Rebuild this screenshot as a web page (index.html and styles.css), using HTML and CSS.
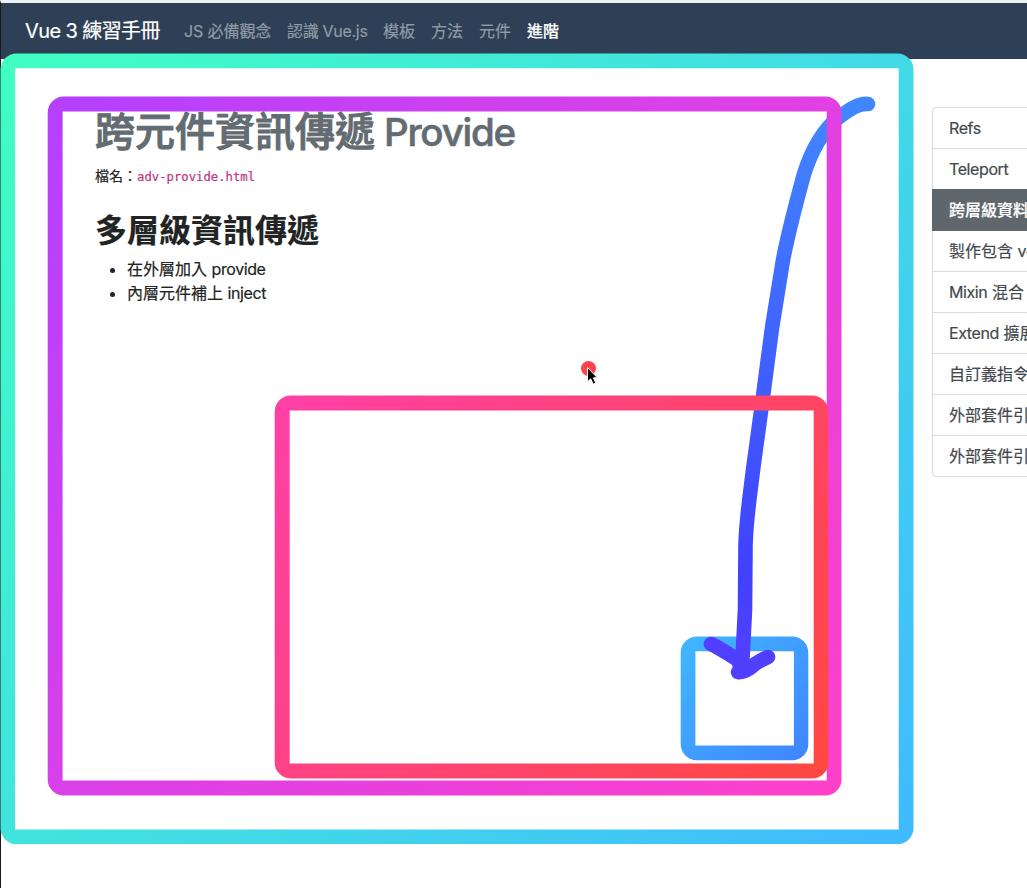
FILE: index.html
```html
<!DOCTYPE html>
<html lang="zh-Hant">
<head>
<meta charset="utf-8">
<title>Vue 3 練習手冊</title>
<link rel="stylesheet" href="styles.css">
</head>
<body>
<div class="window">
  <nav class="navbar">
    <a class="brand">Vue 3 練習手冊</a>
    <a class="nav-link nav-js">JS 必備觀念</a>
    <a class="nav-link nav-vue">認識 Vue.js</a>
    <a class="nav-link">模板</a>
    <a class="nav-link">方法</a>
    <a class="nav-link">元件</a>
    <a class="nav-link active">進階</a>
  </nav>
  <div class="layout">
    <main class="content">
      <h1 class="title">跨元件資訊傳遞<span class="title-latin"> Provide</span></h1>
      <p class="filename">檔名：<code class="code">adv-provide.html</code></p>
      <h2 class="subtitle">多層級資訊傳遞</h2>
      <ul class="list">
        <li>在外層加入 <span class="latin">provide</span></li>
        <li>內層元件補上 <span class="latin">inject</span></li>
      </ul>
    </main>
    <aside class="menu">
      <a class="menu-item"><span class="latin">Refs</span></a>
      <a class="menu-item"><span class="latin">Teleport</span></a>
      <a class="menu-item selected">跨層級資料</a>
      <a class="menu-item">製作包含 <span class="latin">v-</span></a>
      <a class="menu-item"><span class="latin">Mixin</span> 混合</a>
      <a class="menu-item"><span class="latin">Extend</span> 擴展</a>
      <a class="menu-item">自訂義指令</a>
      <a class="menu-item">外部套件引</a>
      <a class="menu-item">外部套件引</a>
    </aside>
  </div>
</div>
<svg class="drawing" width="1027" height="888" viewBox="0 0 1027 888">
  <defs>
    <linearGradient id="teal" gradientUnits="userSpaceOnUse" x1="0" y1="54" x2="913" y2="844"><stop offset="0" stop-color="#40ffc2"/><stop offset=".5" stop-color="#41dfe2"/><stop offset="1" stop-color="#40baff"/></linearGradient>
    <linearGradient id="purple" gradientUnits="userSpaceOnUse" x1="48" y1="97" x2="841" y2="795"><stop offset="0" stop-color="#b440ff"/><stop offset=".5" stop-color="#dd40e6"/><stop offset="1" stop-color="#ff40c8"/></linearGradient>
    <linearGradient id="red" gradientUnits="userSpaceOnUse" x1="275" y1="396" x2="828" y2="778"><stop offset="0" stop-color="#ff40a8"/><stop offset=".5" stop-color="#ff4474"/><stop offset="1" stop-color="#ff4840"/></linearGradient>
    <linearGradient id="blue" gradientUnits="userSpaceOnUse" x1="681" y1="637" x2="808" y2="760"><stop offset="0" stop-color="#40b8ff"/><stop offset="1" stop-color="#4084ff"/></linearGradient>
    <linearGradient id="arrow" gradientUnits="userSpaceOnUse" x1="0" y1="100" x2="0" y2="680"><stop offset="0" stop-color="#4088ff"/><stop offset=".8" stop-color="#4042ff"/><stop offset="1" stop-color="#5540ff"/></linearGradient>
  </defs>
  <circle cx="588.5" cy="368.5" r="7.5" fill="#ff4449"/>
  <path class="frame" fill="url(#teal)" d="M16.500 53.600H897.500A16 16 0 0 1 913.500 69.600V828.100A16 16 0 0 1 897.500 844.100H16.500A16 16 0 0 1 .5 828.100V69.600A16 16 0 0 1 16.500 53.600ZM15 68.300V829.500H898.700V68.300Z"/>
  <path class="frame" fill="url(#blue)" d="M696.700 636.500H792.300A16 16 0 0 1 808.300 652.500V744.300A16 16 0 0 1 792.300 760.300H696.700A16 16 0 0 1 680.700 744.300V652.500A16 16 0 0 1 696.700 636.500ZM695.400 651.200V745.500H793.900V651.200Z"/>
  <g class="strokes">
    <path d="M868 104C858 103 849 110 839 117C823 130 811 152 804 174C795 207 788 234 783 260L772 328L762 404L753 470C750 496 746 520 745.500 546L745 610L742.500 658L742 664" stroke="url(#arrow)"/>
    <path d="M711 644C720 648 728 654 738 660L742 671M738 672Q745 673 755 664Q761 660 768 657" stroke="#513fff"/>
  </g>
  <path class="frame" fill="url(#purple)" d="M63.700 96.500H825.500A16 16 0 0 1 841.500 112.500V779.400A16 16 0 0 1 825.500 795.400H63.700A16 16 0 0 1 47.700 779.400V112.500A16 16 0 0 1 63.700 96.500ZM62.600 111.400V780.600H826.700V111.400Z"/>
  <path class="frame" fill="url(#red)" d="M290.700 395.500H812.300A16 16 0 0 1 828.300 411.500V762.500A16 16 0 0 1 812.300 778.500H290.700A16 16 0 0 1 274.700 762.500V411.500A16 16 0 0 1 290.700 395.500ZM289.700 410.400V763.500H813.700V410.400Z"/>
  <path class="pointer" d="M587.500 367.500V381.800L590.700 378.800L593.200 384.200L595.800 383L593.400 377.800H597.400Z"/>
</svg>
</body>
</html>
```
FILE: styles.css
```css
* { box-sizing: border-box; }
body {
  margin: 0;
  height: 888px;
  overflow: hidden;
  position: relative;
  background: #fff;
  color: #212423;
  font: 16px/24px Inter, "Noto Sans CJK TC", sans-serif;
  -webkit-text-stroke: 0.2px currentColor;
}
.window {
  height: 888px;
  border-left: 1px solid #17191f;
  border-top: 3px solid #eef1f4;
  overflow: hidden;
}
.navbar {
  height: 56px;
  padding-left: 24px;
  display: flex;
  align-items: center;
  background: #2e4055;
  white-space: nowrap;
}
.brand {
  width: 135px;
  margin-right: 16px;
  font-size: 20px;
  letter-spacing: -0.6px;
  color: #fff;
}
.nav-link { padding: 0 8px; color: #919ba6; }
.nav-js { width: 103px; letter-spacing: -0.1px; }
.nav-vue { width: 96px; letter-spacing: -0.3px; }
.active { color: #fff; font-weight: 500; }
.layout { display: flex; }
.content { flex: none; width: 931px; padding: 49px 0 0 94px; }
.title {
  margin: 0 0 9px;
  font-size: 40px;
  line-height: 48px;
  font-weight: 500;
  color: #636c72;
  white-space: nowrap;
  -webkit-text-stroke: 1px currentColor;
}
.title-latin {
  font-size: 38.5px;
  letter-spacing: -1.25px;
  -webkit-text-stroke: 0.6px currentColor;
}
.filename {
  margin: 0 0 26px;
  font-size: 14px;
  line-height: 21px;
}
.code {
  font: 12.25px "DejaVu Sans Mono", monospace;
  color: #c33182;
}
.subtitle {
  margin: 0 0 7px;
  font-size: 32px;
  line-height: 38px;
  font-weight: 700;
}
.list { margin: 0; padding-left: 32px; }
.latin { letter-spacing: -0.4px; }
.menu {
  flex: none;
  width: 220px;
  height: 370px;
  margin-top: 48px;
  border: 1px solid #d9dadb;
  border-radius: 4px;
}
.menu-item {
  display: block;
  height: 41px;
  padding: 8px 16px;
  border-bottom: 1px solid #d9dadb;
  color: #43494d;
  white-space: nowrap;
}
.menu-item:last-child { border-bottom: 0; }
.selected {
  height: 42px;
  margin: -1px 0 0 -1px;
  padding: 9px 17px;
  border-bottom-color: #5f676d;
  background: #5f676d;
  color: #fff;
  font-weight: 500;
}
.drawing { position: absolute; left: 0; top: 0; }
.frame { fill-rule: evenodd; }
.strokes {
  fill: none;
  stroke-width: 14.6px;
  stroke-linecap: round;
  stroke-linejoin: round;
}
.pointer { fill: #000; stroke: #fff; stroke-width: 1px; }
```
